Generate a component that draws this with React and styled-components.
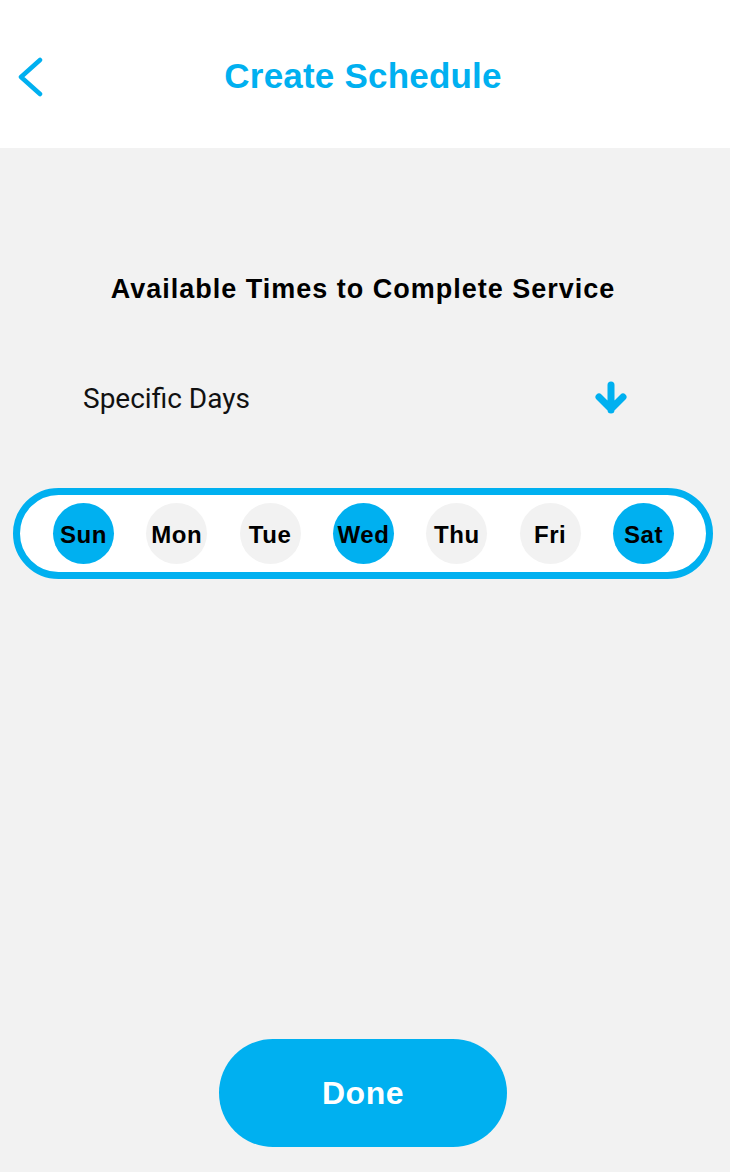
import React, { useState } from 'react';
import styled, { createGlobalStyle } from 'styled-components';

const BLUE = '#00b0f0';

const GlobalStyle = createGlobalStyle`
    html, body {
        margin: 0;
        padding: 0;
        background: #f2f2f2;
    }
    * { box-sizing: border-box; }
`;

const DAYS = ['Sun', 'Mon', 'Tue', 'Wed', 'Thu', 'Fri', 'Sat'];

function App() {
    const [selected, setSelected] = useState(['Sun', 'Wed', 'Sat']);

    const toggle = (d) =>
        setSelected((s) => (s.includes(d) ? s.filter((x) => x !== d) : [...s, d]));

    return (
        <Page>
            <GlobalStyle />
            <Header>
                <BackButton>
                    <svg width="28" height="40" viewBox="0 0 28 40">
                        <polyline
                            points="23,3 4,20 23,37"
                            fill="none"
                            stroke={BLUE}
                            strokeWidth="4.5"
                            strokeLinecap="round"
                            strokeLinejoin="round"
                        />
                    </svg>
                </BackButton>
                <Title>Create Schedule</Title>
                <span />
            </Header>
            <Body>
                <Heading>Available Times to Complete Service</Heading>
                <SelectRow>
                    <SelectLabel>Specific Days</SelectLabel>
                    <svg width="34" height="34" viewBox="0 0 34 34">
                        <path
                            d="M17 4 V29 M5 16 L17 28 L29 16"
                            fill="none"
                            stroke={BLUE}
                            strokeWidth="7"
                            strokeLinecap="round"
                            strokeLinejoin="round"
                        />
                    </svg>
                </SelectRow>
                <DayPill>
                    {DAYS.map((d) => (
                        <DayCircle key={d} active={selected.includes(d)} onClick={() => toggle(d)}>
                            {d}
                        </DayCircle>
                    ))}
                </DayPill>
                <DoneButton>Done</DoneButton>
            </Body>
        </Page>
    );
}

export default App;

const Page = styled.div`
    min-height: 100vh;
    display: flex;
    flex-direction: column;
    font-family: 'Liberation Sans', Arial, sans-serif;
`;

const Header = styled.div`
    height: 148px;
    background: #ffffff;
    display: grid;
    grid-template-columns: 60px 1fr 60px;
    align-items: center;
    padding-right: 4px;
`;

const BackButton = styled.div`
    display: flex;
    align-items: center;
    padding-left: 17px;
    margin-top: 6px;
    cursor: pointer;
`;

const Title = styled.h1`
    margin: 3px 0 0;
    text-align: center;
    color: ${BLUE};
    font-size: 35px;
    font-weight: 700;
    letter-spacing: 0.2px;
`;

const Body = styled.div`
    flex: 1;
    display: flex;
    flex-direction: column;
    padding-right: 4px;
`;

const Heading = styled.h2`
    margin: 126px 0 0;
    text-align: center;
    font-size: 27px;
    line-height: 30px;
    font-weight: 700;
    letter-spacing: 1px;
    color: #000;
`;

const SelectRow = styled.div`
    margin-top: 74px;
    height: 40px;
    display: flex;
    align-items: center;
    justify-content: space-between;
    padding: 0 98px 0 83px;
`;

const SelectLabel = styled.span`
    font-family: Roboto, 'Noto Sans', sans-serif;
    font-size: 28px;
    color: #111;
`;

const DayPill = styled.div`
    margin: 70px 0 0 13px;
    width: 700px;
    height: 91px;
    border: 7px solid ${BLUE};
    border-radius: 46px;
    background: #ffffff;
    display: flex;
    align-items: center;
    justify-content: space-between;
    padding: 0 32px 0 33px;
`;

const DayCircle = styled.div`
    width: 61px;
    height: 61px;
    border-radius: 50%;
    background: ${(p) => (p.active ? BLUE : '#f2f2f2')};
    display: flex;
    align-items: center;
    justify-content: center;
    padding-top: 2px;
    font-size: 24px;
    font-weight: 700;
    letter-spacing: 0.6px;
    color: #000;
    cursor: pointer;
`;

const DoneButton = styled.button`
    margin: auto 0 25px 219px;
    width: 288px;
    height: 108px;
    border: none;
    border-radius: 54px;
    background: ${BLUE};
    color: #ffffff;
    font-family: 'Liberation Sans', Arial, sans-serif;
    font-size: 32px;
    font-weight: 700;
    letter-spacing: 0.5px;
    cursor: pointer;
`;
